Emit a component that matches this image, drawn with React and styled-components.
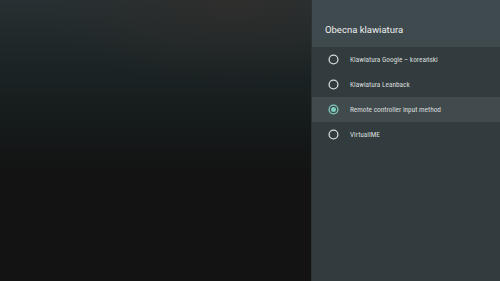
import React from "react";
import styled, { createGlobalStyle } from "styled-components";

const Global = createGlobalStyle`
  html, body { margin: 0; padding: 0; background: #131313; }
  body { font-family: "Roboto Condensed", Roboto, sans-serif; overflow: hidden; }
`;

const Screen = styled.div`
  width: 500px;
  height: 281px;
  display: flex;
  background: #131313;
`;

const Backdrop = styled.div`
  width: 312px;
  height: 100%;
  background:
    radial-gradient(ellipse 60% 30% at 75% 0%, rgba(52, 44, 40, 0.55), rgba(52,44,40,0) 100%),
    linear-gradient(180deg, #273032 0%, #1b2324 25%, #151a1a 45%, #131313 62%, #131313 100%);
`;

const Panel = styled.div`
  flex: 1;
  height: 100%;
  background: #323c3e;
  display: flex;
  flex-direction: column;
  box-shadow: -1px 0 0 #2b3335;
`;

const Header = styled.div`
  height: 47px;
  background: #3e4a4d;
  display: flex;
  align-items: flex-end;
  padding: 0 0 12px 13px;
  box-sizing: border-box;
  color: #eef0f0;
  font-family: Roboto, sans-serif;
  font-size: 9.5px;
  line-height: 11px;
`;

const List = styled.div`
  display: flex;
  flex-direction: column;
`;

const Row = styled.div`
  height: 25px;
  display: flex;
  align-items: center;
  padding-left: 16px;
  gap: 11px;
  background: ${(p) => (p.$active ? "#414b4d" : "transparent")};
  color: #d9dcdc;
  font-size: 7.3px;
`;

const Radio = ({ checked }) => (
  <svg width="11" height="11" viewBox="0 0 11 11">
    <circle
      cx="5.5"
      cy="5.5"
      r="4.4"
      fill="none"
      stroke={checked ? "#7fcbbf" : "#d5d9d9"}
      strokeWidth="1.3"
    />
    {checked && <circle cx="5.5" cy="5.5" r="2.5" fill="#7fcbbf" />}
  </svg>
);

const items = [
  "Klawiatura Google – koreański",
  "Klawiatura Leanback",
  "Remote controller input method",
  "VirtualIME",
];

export default function App() {
  return (
    <>
      <Global />
      <Screen>
        <Backdrop />
        <Panel>
          <Header>Obecna klawiatura</Header>
          <List>
            {items.map((t, i) => (
              <Row key={t} $active={i === 2}>
                <Radio checked={i === 2} />
                <span>{t}</span>
              </Row>
            ))}
          </List>
        </Panel>
      </Screen>
    </>
  );
}
